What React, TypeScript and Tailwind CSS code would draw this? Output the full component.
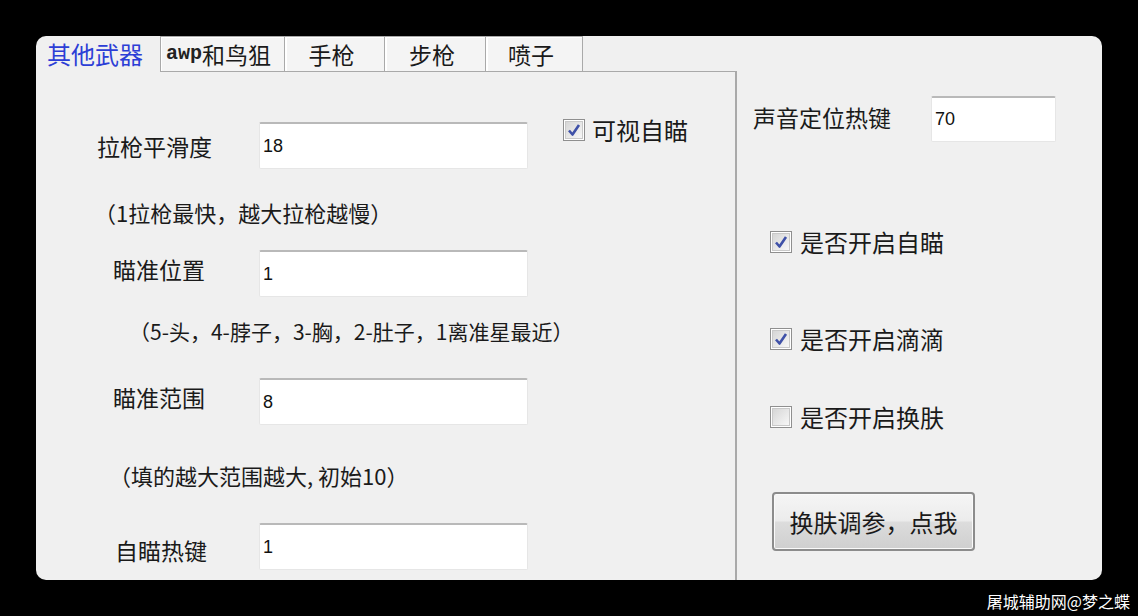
import React from 'react';

const cjk = "font-['Noto_Sans_CJK_SC',sans-serif]";

const tabs = [
  { label: '手枪', w: 'w-[100px]' },
  { label: '步枪', w: 'w-[101px]' },
  { label: '喷子', w: 'w-[97px]' },
];

// Win7 style checkbox with the blue tick
const CheckBox: React.FC<{ checked: boolean }> = ({ checked }) => (
  <span className="flex h-[22px] w-[22px] shrink-0 items-center justify-center border border-[#8f8f8f] bg-white">
    <span className="flex h-[18px] w-[18px] items-center justify-center border border-[#c9c9c9] bg-[linear-gradient(135deg,#d6d6d6,#f7f7f7)]">
      {checked && (
        <svg width="16" height="16" viewBox="0 0 16 16">
          <path d="M3 8.5 L6.5 12.5 L13 3" fill="none" stroke="#3f51a8" strokeWidth="2.6" strokeLinejoin="round" />
        </svg>
      )}
    </span>
  </span>
);

const Field: React.FC<{ value: string; className?: string }> = ({ value, className = 'w-[269px] h-[47px]' }) => (
  <div
    className={`${className} flex items-center rounded-[2px] border border-[#e6e6e6] border-t-2 border-t-[#b9b9b9] bg-white pl-[3px] font-['Liberation_Sans',sans-serif] text-[18px] text-[#111]`}
  >
    {value}
  </div>
);

const Row: React.FC<{ label: string; pad: string; value: string; children?: React.ReactNode }> = ({ label, pad, value, children }) => (
  <div className="flex items-center">
    <div className={`w-[223px] ${pad} text-[23px] leading-[30px] text-[#1a1a1a]`}>{label}</div>
    <Field value={value} />
    {children}
  </div>
);

const Hint: React.FC<{ text: string; pad: string; mt: string }> = ({ text, pad, mt }) => (
  <div className={`${pad} ${mt} text-[21px] leading-[30px] text-[#1a1a1a]`}>{text}</div>
);

const Option: React.FC<{ checked: boolean; label: string; mt: string }> = ({ checked, label, mt }) => (
  <div className={`${mt} flex h-[24px] items-center gap-[8px] pl-[33px]`}>
    <CheckBox checked={checked} />
    <span className="text-[24px] leading-[24px] text-[#1a1a1a]">{label}</span>
  </div>
);

export default function App() {
  return (
    <div className={`h-[616px] w-[1138px] overflow-hidden bg-black pt-[36px] ${cjk}`}>
      <div className="ml-[36px] flex h-[544px] w-[1066px] overflow-hidden rounded-[10px] bg-[#f0f0f0]">
        {/* left: tab control */}
        <div className="flex w-[701px] flex-col">
          <div className="flex h-[36px]">
            <div className="flex w-[124px] items-center pl-[11px] text-[24px] leading-none text-[#2c3ed6]">其他武器</div>
            <div className="flex w-[125px] items-center border border-[#a9a9a9] bg-[#f4f4f4] pl-[5px] shadow-[inset_1px_1px_0_#ffffff]">
              <span className="font-mono text-[20px] font-semibold leading-none text-[#222]">awp</span>
              <span className="text-[23px] leading-none text-[#1a1a1a]">和鸟狙</span>
            </div>
            {tabs.map((t) => (
              <div
                key={t.label}
                className={`${t.w} flex items-center justify-center border border-l-0 border-[#a9a9a9] bg-[#f4f4f4] pr-[6px] shadow-[inset_2px_1px_0_#ffffff] text-[23px] leading-none text-[#1a1a1a]`}
              >
                {t.label}
              </div>
            ))}
            <div className="flex-1 border-b border-[#a9a9a9]" />
          </div>

          <div className="flex flex-1 flex-col border-r-2 border-[#a9a9a9] pt-[50px]">
            <Row label="拉枪平滑度" pad="pl-[61px]" value="18">
              <div className="ml-[35px] flex -translate-y-[16px] items-center gap-[7px]">
                <CheckBox checked />
                <span className="text-[24px] leading-[24px] text-[#1a1a1a]">可视自瞄</span>
              </div>
            </Row>
            <Hint text="（1拉枪最快，越大拉枪越慢）" pad="pl-[58px] text-[22px]" mt="mt-[28px]" />
            <div className="mt-[23px]">
              <Row label="瞄准位置" pad="pl-[77px] -translate-y-[5px]" value="1" />
            </div>
            <Hint text="（5-头，4-脖子，3-胸，2-肚子，1离准星最近）" pad="pl-[93px]" mt="mt-[19px]" />
            <div className="mt-[32px]">
              <Row label="瞄准范围" pad="pl-[77px] -translate-y-[5px]" value="8" />
            </div>
            <Hint text="（填的越大范围越大, 初始10）" pad="pl-[73px] text-[22px]" mt="mt-[35px]" />
            <div className="mt-[33px]">
              <Row label="自瞄热键" pad="pl-[79px] translate-y-[3px]" value="1" />
            </div>
          </div>
        </div>

        {/* right: hotkey and switches */}
        <div className="flex flex-1 flex-col pt-[60px]">
          <div className="flex items-center">
            <div className="w-[194px] -translate-y-[2px] pl-[16px] text-[23px] leading-[30px] text-[#1a1a1a]">声音定位热键</div>
            <Field value="70" className="h-[46px] w-[125px]" />
          </div>
          <Option checked label="是否开启自瞄" mt="mt-[88px]" />
          <Option checked label="是否开启滴滴" mt="mt-[73px]" />
          <Option checked={false} label="是否开启换肤" mt="mt-[54px]" />
          <div className="ml-[35px] mt-[63px]">
            <button className="flex h-[59px] w-[203px] items-center justify-center rounded-[4px] border-2 border-[#8c8c8c] bg-[linear-gradient(#f5f5f5_0%,#ececec_48%,#dcdcdc_52%,#cfcfcf_100%)] text-[24px] leading-none text-[#1a1a1a] shadow-[inset_0_0_0_1px_#fafafa]">
              换肤调参，点我
            </button>
          </div>
        </div>
      </div>
      <div className="mt-[11px] flex justify-end pr-[8px] text-[16px] leading-[20px] text-white">屠城辅助网@梦之蝶</div>
    </div>
  );
}
